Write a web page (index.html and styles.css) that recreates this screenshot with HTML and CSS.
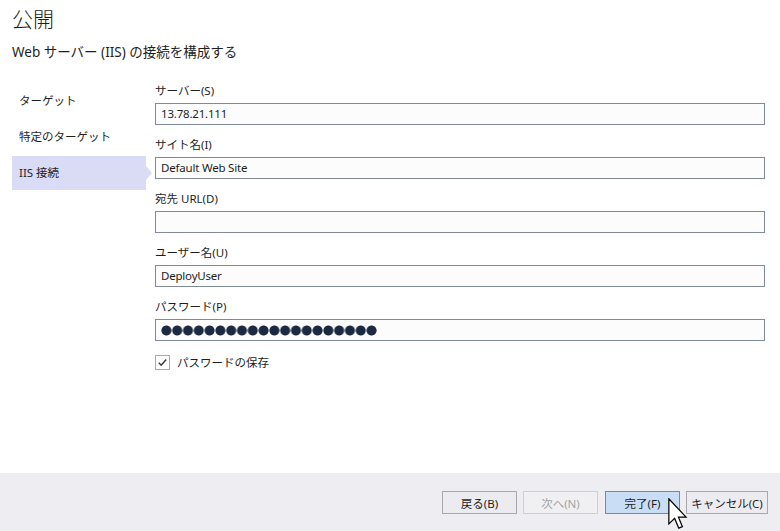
FILE: index.html
```html
<!DOCTYPE html>
<html lang="ja">
<head>
<meta charset="utf-8">
<title>公開</title>
<link rel="stylesheet" href="styles.css">
</head>
<body>
<div class="window">
  <div class="main">
    <header class="header">
      <h1 class="title">公開</h1>
      <h2 class="subtitle">Web サーバー (IIS) の接続を構成する</h2>
    </header>
    <div class="content">
      <nav class="nav">
        <div class="nav-item">ターゲット</div>
        <div class="nav-item">特定のターゲット</div>
        <div class="nav-item selected">IIS 接続</div>
      </nav>
      <form class="form">
        <div class="field">
          <label class="label">サーバー(S)</label>
          <div class="input">13.78.21.111</div>
        </div>
        <div class="field">
          <label class="label">サイト名(I)</label>
          <div class="input">Default Web Site</div>
        </div>
        <div class="field">
          <label class="label">宛先 URL(D)</label>
          <div class="input"></div>
        </div>
        <div class="field">
          <label class="label">ユーザー名(U)</label>
          <div class="input">DeployUser</div>
        </div>
        <div class="field">
          <label class="label">パスワード(P)</label>
          <div class="input"><span class="dots" aria-label="●●●●●●●●●●●●●●●●●●●●"></span></div>
        </div>
        <div class="check-row">
          <span class="checkbox">
            <svg width="11" height="11" viewBox="0 0 11 11"><path d="M1.8 5.8 L4.2 8.2 L9.2 2.6" fill="none" stroke="#3a3a3a" stroke-width="1.5"/></svg>
          </span>
          <span class="check-label">パスワードの保存</span>
        </div>
      </form>
    </div>
  </div>
  <footer class="footer">
    <button class="btn" type="button">戻る(B)</button>
    <button class="btn disabled" type="button">次へ(N)</button>
    <button class="btn primary" type="button">完了(F)</button>
    <button class="btn cancel" type="button">キャンセル(C)</button>
    <svg class="cursor" width="20" height="32" viewBox="0 0 13 21">
      <path d="M0.5 0.5 L0.5 17 L4.3 13.4 L7 19.8 L9.4 18.8 L6.8 12.6 L11.8 12.6 Z" fill="#fff" stroke="#000" stroke-width="0.8" stroke-linejoin="miter"/>
    </svg>
  </footer>
</div>
</body>
</html>
```
FILE: styles.css
```css
* { box-sizing: border-box; }
html, body {
  margin: 0;
  padding: 0;
  background: #ffffff;
}
body {
  font-family: "Noto Sans", "Noto Sans CJK JP", sans-serif;
  color: #1e1e1e;
  font-size: 12px;
}
.window {
  width: 780px;
  height: 531px;
  display: flex;
  flex-direction: column;
  position: relative;
  overflow: hidden;
}
.main {
  flex: 1;
  background: #ffffff;
}
.header {
  padding: 4px 0 0 12px;
}
.title {
  margin: 0;
  font-family: "Noto Sans CJK JP", sans-serif;
  font-size: 21px;
  font-weight: 300;
  line-height: 28px;
  color: #1e1e1e;
}
.subtitle {
  margin: 10px 0 0 0;
  font-size: 13.5px;
  font-weight: 400;
  line-height: 20px;
  color: #1e1e1e;
}
.content {
  display: flex;
  margin-top: 21px;
  padding-left: 12px;
}
.nav {
  width: 134px;
  display: flex;
  flex-direction: column;
  gap: 2px;
  padding-top: 1px;
}
.nav-item {
  height: 34px;
  line-height: 34px;
  padding-left: 7px;
  font-size: 11.5px;
  position: relative;
}
.nav-item.selected {
  background: #dadcf6;
}
.nav-item.selected::after {
  content: "";
  position: absolute;
  right: -6px;
  top: 10px;
  border-top: 7px solid transparent;
  border-bottom: 7px solid transparent;
  border-left: 6px solid #dadcf6;
}
.form {
  margin-left: 9px;
  width: 610px;
  display: flex;
  flex-direction: column;
}
.field {
  display: flex;
  flex-direction: column;
  margin-bottom: 12px;
}
.label {
  height: 16px;
  line-height: 16px;
  margin-bottom: 4px;
  font-size: 11.5px;
}
.input {
  height: 22px;
  border: 1px solid #7e8a9b;
  background: #fcfcfc;
  padding: 0 5px;
  line-height: 20px;
  font-size: 11.5px;
  letter-spacing: -0.2px;
  display: flex;
  align-items: center;
}
.dots {
  display: block;
  width: 216px;
  height: 11px;
  background-image: radial-gradient(circle at center, #1b2a41 4.6px, rgba(27,42,65,0) 5.4px);
  background-size: 10.8px 11px;
  background-repeat: repeat-x;
}
.check-row {
  display: flex;
  align-items: center;
  margin-top: 1px;
  gap: 7px;
}
.checkbox {
  width: 15px;
  height: 15px;
  border: 1px solid #dba24a;
  background: #fff;
  display: flex;
  align-items: center;
  justify-content: center;
}
.check-label {
  font-size: 11.5px;
}
.footer {
  height: 58px;
  background: #eeeef2;
  display: flex;
  justify-content: flex-end;
  align-items: flex-start;
  padding: 18px 12px 0 0;
  gap: 6px;
}
.btn {
  width: 75px;
  height: 23px;
  font-family: "Noto Sans", "Noto Sans CJK JP", sans-serif;
  font-size: 11.5px;
  color: #1e1e1e;
  background: #ececf0;
  border: 1px solid #a8a8ac;
  padding: 0;
  margin: 0;
}
.btn.disabled {
  color: #a2a4a6;
  border-color: #cccedb;
  background: #f0f0f3;
}
.btn.primary {
  background: #c9def5;
  border-color: #3399ff;
  margin-left: 1px;
}
.btn.cancel {
  width: 82px;
}
.cursor {
  position: absolute;
  left: 668px;
  top: 498px;
}
```
